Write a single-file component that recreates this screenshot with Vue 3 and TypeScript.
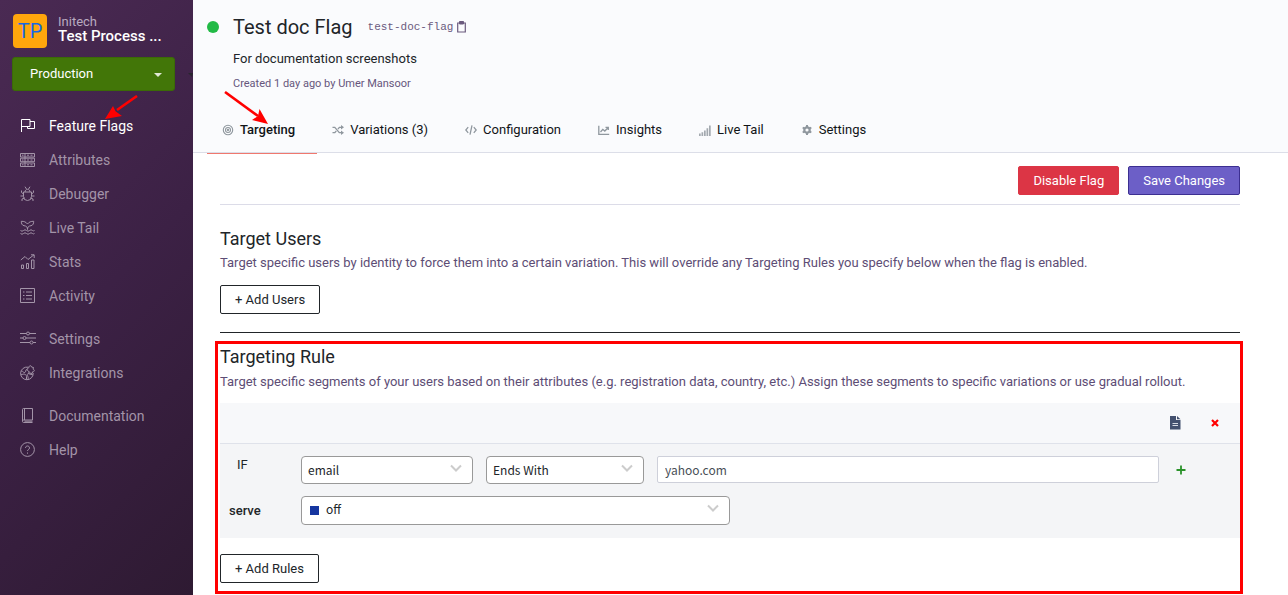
<script setup lang="ts">
import { ref } from 'vue'

interface NavItem {
  label: string
  icon: string
}

const navGroups: NavItem[][] = [
  [
    { label: 'Feature Flags', icon: 'M1.500 14V1.500h8.500v7h-8.500M10 3.500h4.500v7h-7v-2' },
    {
      label: 'Attributes',
      icon: 'M.5 1.500h14v3.500H.5zM.5 6.200h14v3.500H.5zM.5 11h14v3.500H.5zM5 1.500v13M2 3.200h1.500M2 8h1.500M2 12.800h1.500M7 3.200h2M10.500 3.200h2M7 8h2M10.500 8h2M7 12.800h2M10.500 12.800h2',
    },
    {
      label: 'Debugger',
      icon: 'M3.500 6h8v4.500a4 4 0 0 1-8 0zM5 6c0-3.500 5-3.500 5 0M6.500 3L5 .7M8.500 3L10 .7M3.500 8L1.500 6.500V4.500M11.500 8l2-1.500V4.500M3.500 10H.5M11.500 10h3M4.500 12L2 13v2M10.500 12l2.500 1v2',
    },
    {
      label: 'Live Tail',
      icon: 'M7.500 9.500C7.500 7 6.500 6 4 5.700 2 5.300 1.300 3.500 1.300 1.300 4 1.200 6 2 7.500 4 9 2 11 1.200 13.700 1.300c0 2.200-.7 4-2.700 4.400-2.500.3-3.500 1.300-3.500 3.800M.5 10.500q1.500 1.500 3 0 1.500-1.500 3 0 1.500 1.500 3 0 1.500-1.500 3 0 1 .8 2 0M.5 13.500q1.500 1.500 3 0 1.500-1.500 3 0 1.500 1.500 3 0 1.500-1.500 3 0 1 .8 2 0',
    },
    {
      label: 'Stats',
      icon: 'M1.500 11h2v3.500h-2zM6.500 9.500h2v5h-2zM11.500 6h2.500v8.500h-2.500zM.8 6L5 2.500l3 3L14 .8M11 .8h3.200V4',
    },
    {
      label: 'Activity',
      icon: 'M.5.5h14v14H.5zM3 4h1.500M6 4h6M3 7.500h1.500M6 7.500h6M3 11h1.500M6 11h6',
    },
  ],
  [
    {
      label: 'Settings',
      icon: 'M0 2.500h6.500M9.500 2.500H16M0 7h3M6 7h10M0 11.500h10M13 11.500h3M6.500 2.500a1.500 1.500 0 1 0 3 0 1.500 1.500 0 1 0-3 0M3 7a1.500 1.500 0 1 0 3 0 1.500 1.500 0 1 0-3 0M10 11.500a1.500 1.500 0 1 0 3 0 1.500 1.500 0 1 0-3 0',
    },
    {
      label: 'Integrations',
      icon: 'M8 2.200A6.300 6.300 0 1 0 13.200 8M1.300 6c2 0 2 2 3.500 1.500S5 4.500 7 4.500M1 10c3-2 5.500-.5 5.500 1.500v3M8 8.500c-2 1.500 1 3 0 6M8 8.500L13 10M7.500 3.500l1.500-1c-.5-2 2.500-2.500 2.500-.5l2 .5-.5 1.700c2 .3 1.500 2.800-.3 2.500L12 8.500 8.800 7.800l.3-1.500C7.500 6.500 7 5 7.500 3.500',
    },
  ],
  [
    { label: 'Documentation', icon: 'M2.500 13V1.500Q2.500.5 3.500.5h9v11.500H3.500q-1 0-1 1.200 0 1.300 1 1.300h9M4.500.5V12M4.500 13.200h8' },
    {
      label: 'Help',
      icon: 'M.6 7.500a6.900 6.900 0 1 0 13.800 0 6.900 6.900 0 1 0-13.800 0M5.500 6c0-2.700 4-2.700 4 0 0 1.500-2 1.500-2 3M7.500 10.500v1.200',
    },
  ],
]

const tabs = [
  { id: 'targeting', label: 'Targeting' },
  { id: 'variations', label: 'Variations (3)' },
  { id: 'configuration', label: 'Configuration' },
  { id: 'insights', label: 'Insights' },
  { id: 'tail', label: 'Live Tail' },
  { id: 'settings', label: 'Settings' },
]

const environment = ref('Production')
const attribute = ref('email')
const operator = ref('Ends With')
const matchValue = ref('yahoo.com')
const variation = ref('off')
</script>

<template>
  <div class="app">
    <aside class="sidebar">
      <div class="account">
        <span class="avatar">TP</span>
        <div class="names">
          <span class="org">Initech</span>
          <span class="project">Test Process ...</span>
        </div>
      </div>
      <div class="env">
        <select v-model="environment" aria-label="Environment">
          <option>Production</option>
        </select>
        <span class="caret"></span>
        <span class="caret edge"></span>
      </div>
      <nav>
        <ul v-for="(group, g) in navGroups" :key="g">
          <li v-for="item in group" :key="item.label">
            <a href="#" :class="{ active: item.label === 'Feature Flags' }">
              <svg width="16" height="16" viewBox="0 0 16 16"><path :d="item.icon" /></svg>
              {{ item.label }}
            </a>
          </li>
        </ul>
      </nav>
    </aside>

    <main>
      <header>
        <div class="title-row">
          <span class="status"></span>
          <h1>Test doc Flag</h1>
          <code>test-doc-flag</code>
          <button class="icon-button" aria-label="Copy key">
            <svg width="9" height="12" viewBox="0 0 9 12" fill="none" stroke="#6b5a7e">
              <path d="M.7 2h7.600v9H.7z" stroke-width="1.200" />
              <path d="M2.500.5h4v2.500h-4z" fill="#6b5a7e" />
            </svg>
          </button>
        </div>
        <p class="description">For documentation screenshots</p>
        <p class="created">Created 1 day ago by Umer Mansoor</p>
        <nav class="tabs">
          <a v-for="tab in tabs" :key="tab.id" href="#" :class="{ current: tab.id === 'targeting' }">
            <svg width="12" height="12" viewBox="0 0 12 12" fill="none" stroke="#8f979e" stroke-width="1.300">
              <g v-if="tab.id === 'targeting'" stroke-width="1.100">
                <circle cx="6" cy="6" r="4.700" /><circle cx="6" cy="6" r="2.500" /><circle cx="6" cy="6" r=".6" />
              </g>
              <g v-else-if="tab.id === 'variations'">
                <path d="M.5 3.300h2.300l4.500 5.400H10M.5 8.700h2.300L4.300 7M5.900 5.100l1.500-1.800H10" />
                <path d="M9 1l3 2.300-3 2.300zM9 6.400l3 2.300L9 11z" fill="#8f979e" stroke="none" />
              </g>
              <path v-else-if="tab.id === 'configuration'" d="M3.200 3.200L.8 6l2.400 2.800M8.800 3.200L11.200 6 8.800 8.800M7 1.300L5 10.700" />
              <path v-else-if="tab.id === 'insights'" d="M.8 1.800v8.500h10.400M2.500 8l2.300-2.700 2 1.700L10 3.700M7.500 3.300h2.800V6" />
              <g v-else-if="tab.id === 'tail'" fill="#a3a9af" stroke="none">
                <path d="M0 9.500h1.700V12H0zM2.500 8.300h1.700V12H2.500zM5 6.500h1.700V12H5zM7.500 4.200h1.700V12H7.500zM10 1.500h1.700V12H10z" />
              </g>
              <g v-else>
                <circle cx="6" cy="6" r="2.700" stroke-width="2.200" />
                <path d="M6 1v2M6 9v2M1.700 3.500l1.700 1M8.600 7.500l1.700 1M1.700 8.500l1.700-1M8.600 4.500l1.700-1" stroke-width="2" />
              </g>
            </svg>
            {{ tab.label }}
          </a>
        </nav>
      </header>

      <div class="content">
        <div class="actions">
          <button class="btn danger">Disable Flag</button>
          <button class="btn primary">Save Changes</button>
        </div>

        <section class="users">
          <h2>Target Users</h2>
          <p>Target specific users by identity to force them into a certain variation. This will override any Targeting Rules you specify below when the flag is enabled.</p>
          <button class="btn outline">+ Add Users</button>
        </section>

        <section class="rules">
          <h2>Targeting Rule</h2>
          <p>Target specific segments of your users based on their attributes (e.g. registration data, country, etc.) Assign these segments to specific variations or use gradual rollout.</p>
          <div class="panel">
            <div class="panel-head">
              <button class="icon-button" aria-label="Rule notes">
                <svg width="11" height="14" viewBox="0 0 11 14">
                  <path d="M0 0h6v4h4.500v9.500H0z" fill="#43506e" />
                  <path d="M7 0l3.500 3.200H7z" fill="#43506e" />
                  <path d="M2.500 7.500h5.500M2.500 9.500h5.500" stroke="#d5d9e2" stroke-width="1" />
                </svg>
              </button>
              <button class="icon-button" aria-label="Remove rule">
                <svg width="8" height="8" viewBox="0 0 8 8"><path d="M1 1l6 6M7 1L1 7" stroke="#f00" stroke-width="2.200" /></svg>
              </button>
            </div>
            <div class="condition">
              <label class="if" for="attribute">IF</label>
              <div class="pick">
                <select id="attribute" v-model="attribute"><option>email</option></select>
                <svg class="chevron" width="12" height="8" viewBox="0 0 12 8"><path d="M1 1.500l5 5 5-5" /></svg>
              </div>
              <div class="pick">
                <select v-model="operator" aria-label="Operator"><option>Ends With</option></select>
                <svg class="chevron" width="12" height="8" viewBox="0 0 12 8"><path d="M1 1.500l5 5 5-5" /></svg>
              </div>
              <input v-model="matchValue" type="text" aria-label="Value" />
              <button class="icon-button" aria-label="Add condition">
                <svg width="10" height="10" viewBox="0 0 10 10"><path d="M5 .5v9M.5 5h9" stroke="#2a922a" stroke-width="1.800" /></svg>
              </button>
            </div>
            <div class="serve">
              <label for="variation">serve</label>
              <div class="pick">
                <select id="variation" v-model="variation"><option>off</option></select>
                <span class="swatch"></span>
                <svg class="chevron" width="12" height="8" viewBox="0 0 12 8"><path d="M1 1.500l5 5 5-5" /></svg>
              </div>
            </div>
          </div>
          <button class="btn outline">+ Add Rules</button>
        </section>
      </div>
    </main>

    <svg class="arrow nav-arrow" width="34" height="26" viewBox="0 0 34 26">
      <path d="M33 1L13 15" stroke="#f00" stroke-width="2.600" />
      <path d="M1 24L9 11l2.500 5.300L18 21z" fill="#f00" />
    </svg>
    <svg class="arrow tab-arrow" width="46" height="34" viewBox="0 0 46 34">
      <path d="M1 1L34 25" stroke="#f00" stroke-width="2.600" />
      <path d="M44 33L28 29l6-4 1.500-7z" fill="#f00" />
    </svg>
  </div>
</template>

<style>
body {
  margin: 0;
}
</style>

<style scoped>
* {
  box-sizing: border-box;
}
.app {
  position: relative;
  display: flex;
  min-height: 100vh;
  font-family: Roboto, 'Liberation Sans', sans-serif;
  font-size: 13px;
  line-height: 20px;
  color: #212529;
  background: #fff;
}
h1,
h2,
p,
ul {
  margin: 0;
  padding: 0;
  font-weight: 400;
}
a {
  color: inherit;
  text-decoration: none;
}
button,
select,
input {
  font: inherit;
  color: inherit;
  margin: 0;
}
.sidebar {
  width: 193px;
  flex: none;
  background: linear-gradient(135deg, #4a2a53, #3c2145 50%, #2e1a32);
}
.account {
  display: flex;
  gap: 11px;
  padding: 14px 13px 9px;
}
.avatar {
  display: grid;
  place-items: center;
  width: 34px;
  height: 34px;
  border-radius: 4px;
  background: #ffa60c;
  color: #1668e3;
  font-size: 20px;
}
.names {
  display: flex;
  flex-direction: column;
  line-height: 15px;
}
.org {
  color: #b9abc0;
}
.project {
  color: #fff;
  font-size: 15px;
  font-weight: 500;
  white-space: nowrap;
}
.env {
  position: relative;
  display: grid;
  align-items: center;
  margin: 0 18px 18px 12px;
}
.env select {
  appearance: none;
  height: 34px;
  padding: 0 17px;
  border: 1px solid #3b6a06;
  border-radius: 3px;
  background: #427608;
  color: #fff;
}
.caret {
  position: absolute;
  right: 13px;
  top: 16px;
  border: 4px solid transparent;
  border-top-color: #e0e8d5;
  border-bottom: 0;
}
.caret.edge {
  right: -18px;
  border-right-width: 1px;
  border-top-color: #28252e;
}
ul {
  list-style: none;
  margin-bottom: 9px;
}
.sidebar li a {
  display: flex;
  align-items: center;
  gap: 13px;
  height: 34px;
  padding-left: 20px;
  font-size: 14px;
  color: #a394a8;
}
.sidebar li a.active {
  color: #fff;
}
.sidebar li path {
  fill: none;
  stroke: currentColor;
}
main {
  flex: 1;
  min-width: 0;
}
header {
  padding: 14px 14px 0;
  border-bottom: 1px solid #dcdee8;
  background: #fafbfd;
}
.title-row {
  display: flex;
  align-items: center;
  height: 26px;
}
.status {
  width: 12px;
  height: 12px;
  margin-right: 14px;
  border-radius: 50%;
  background: #22ba46;
}
h1 {
  font-size: 20px;
  margin-right: 15px;
}
code {
  font: 11px 'Liberation Mono', monospace;
  color: #6b5a7e;
  margin-right: 4px;
}
.icon-button {
  display: grid;
  place-items: center;
  padding: 0;
  border: 0;
  background: none;
}
.description {
  margin: 9px 26px 5px;
}
.created {
  margin: 0 26px;
  font-size: 11px;
  color: #66567c;
}
.tabs {
  display: flex;
  margin-top: 13px;
  color: #111417;
}
.tabs a {
  display: flex;
  align-items: center;
  gap: 6px;
  height: 47px;
  padding: 0 22px 0 15px;
  margin-bottom: -2px;
  border-bottom: 1px solid transparent;
}
.tabs .current {
  border-color: #f0786e;
  font-weight: 500;
}
.content {
  padding: 13px 48px 1px 27px;
}
.actions {
  display: flex;
  justify-content: flex-end;
  gap: 9px;
  padding-bottom: 9px;
  border-bottom: 1px solid #dcdce8;
}
.btn {
  height: 29px;
  padding: 0 14px;
  border: 1px solid #212529;
  border-radius: 2px;
  background: #fff;
}
.danger {
  border-color: #dc3545;
  background: #dc3545;
  color: #fff;
}
.primary {
  border-color: #3c2f91;
  background: #6c5fc7;
  color: #fff;
}
h2 {
  font-size: 18px;
  line-height: 24px;
}
section p {
  color: #5d4d75;
  padding-bottom: 12px;
}
.users {
  padding: 22px 0 18px;
  border-bottom: 1px solid #212529;
}
.users p {
  padding-top: 2px;
}
.rules {
  margin: 8px -3px 0 -5px;
  padding: 1px 0 8px 2px;
  border: 3px solid #f00;
}
.rules p {
  padding: 3px 0 11px;
}
.panel {
  margin-bottom: 16px;
  padding-bottom: 13px;
  background: #f4f5f7;
}
.panel-head {
  display: flex;
  justify-content: flex-end;
  align-items: center;
  gap: 30px;
  height: 41px;
  padding-right: 21px;
  border-bottom: 1px solid #dfe2ea;
  background: #f7f8fa;
}
.condition {
  display: grid;
  grid-template-columns: 68px 172px 158px 1fr 18px;
  gap: 13px;
  padding: 12px 50px 12px 0;
}
.if {
  padding-left: 17px;
  line-height: 18px;
}
.pick {
  display: grid;
  position: relative;
  font-family: 'Noto Sans CJK SC', sans-serif;
  font-size: 12px;
}
.pick select {
  appearance: none;
  height: 28px;
  padding: 0 6px;
  border: 1px solid #999;
  border-radius: 4px;
  background: #fff;
}
.chevron {
  position: absolute;
  right: 11px;
  top: 8px;
  fill: none;
  stroke: #ccc;
  stroke-width: 2;
}
input {
  width: 100%;
  height: 27px;
  padding: 0 7px;
  border: 1px solid #ced0da;
  border-radius: 2px;
  background: #fff;
  color: #495057;
  font-family: 'Noto Sans CJK SC', sans-serif;
  font-size: 12px;
}
.serve {
  display: grid;
  grid-template-columns: 81px 429px;
  align-items: center;
}
.serve label {
  padding-left: 9px;
  font-weight: 500;
}
.serve select {
  height: 29px;
  padding: 0 24px 3px;
}
.swatch {
  position: absolute;
  left: 9px;
  top: 10px;
  width: 9px;
  height: 9px;
  background: #1636a0;
}
.arrow {
  position: absolute;
  fill: none;
  pointer-events: none;
}
.nav-arrow {
  left: 104px;
  top: 95px;
}
.tab-arrow {
  left: 224px;
  top: 91px;
}
</style>
